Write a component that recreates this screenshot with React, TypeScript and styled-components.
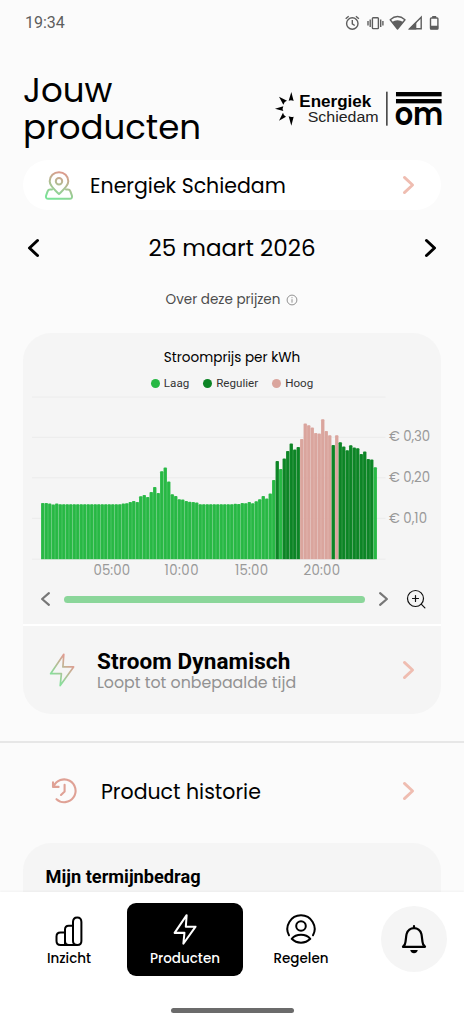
import React from "react";
import styled, { createGlobalStyle } from "styled-components";

const GEO = '"Poppins", "Inter", "Open Sans", sans-serif';
const ROBOTO = '"Roboto", "Liberation Sans", sans-serif';

const GlobalStyle = createGlobalStyle`
  * { box-sizing: border-box; }
  html, body { margin: 0; padding: 0; height: 100%; background: #fbfbfb; }
  body { font-family: ${GEO}; color: #000; overflow: hidden; }
  svg { display: block; flex: none; overflow: visible; }
`;

const Screen = styled.div`
  width: 464px;
  height: 1024px;
  display: flex;
  flex-direction: column;
  overflow: hidden;
  background: #fbfbfb;
`;

const StatusBar = styled.div`
  height: 45px;
  flex: none;
  display: flex;
  align-items: center;
  justify-content: space-between;
  padding: 0 23px 0 25px;
`;

const Clock = styled.span`
  font: 400 16px/20px ${ROBOTO};
  color: #5e5e5e;
`;

const Content = styled.main`
  flex: 1;
  min-height: 0;
  overflow: hidden;
`;

const Header = styled.header`
  display: flex;
  justify-content: space-between;
  height: 115px;
  padding: 27px 22px 0 23px;
`;

const Title = styled.h1`
  margin: 0;
  font-weight: 400;
  font-size: 34px;
  line-height: 36.5px;
`;

const LogoWrap = styled.div`
  padding-top: 18px;
`;

const Pill = styled.div`
  display: flex;
  align-items: center;
  height: 50px;
  margin: 0 23px;
  padding: 0 27px 0 22px;
  border-radius: 25px;
  background: #fff;
`;

const RowLabel = styled.span<{ $indent: number }>`
  flex: 1;
  margin-left: ${(p) => p.$indent}px;
  padding-top: 1px;
  font-size: 20.5px;
  line-height: 30px;
  white-space: nowrap;
`;

const DateNav = styled.div`
  display: flex;
  align-items: center;
  justify-content: space-between;
  height: 76px;
  padding: 0 28px;
`;

const DateText = styled.span`
  font-size: 23px;
  line-height: 30px;
`;

const PriceInfo = styled.div`
  display: flex;
  align-items: center;
  justify-content: center;
  gap: 6px;
  height: 28px;
  font-size: 13.5px;
  color: #4c4c4c;
`;

const Card = styled.section`
  height: 381px;
  margin: 19px 23px 0;
  border-radius: 28px;
  background: #f5f5f5;
  overflow: hidden;
`;

const ChartPanel = styled.div`
  height: 291px;
  padding-top: 14px;
`;

const ChartTitle = styled.div`
  text-align: center;
  font-size: 13.6px;
  line-height: 22px;
`;

const Legend = styled.div`
  display: flex;
  justify-content: center;
  gap: 14px;
  height: 26px;
  padding-top: 2px;
`;

const LegendItem = styled.span<{ $color: string }>`
  display: flex;
  align-items: center;
  gap: 4px;
  font: 400 11.6px/24px ${ROBOTO};
  color: #333;
  &::before {
    content: "";
    width: 9px;
    height: 9px;
    border-radius: 50%;
    background: ${(p) => p.$color};
  }
`;

const ScrollRow = styled.div`
  display: flex;
  align-items: center;
  height: 30px;
  padding: 0 15px 0 17.5px;
`;

const ScrollTrack = styled.div`
  flex: 1;
  height: 7px;
  margin: 0 14.5px;
  border-radius: 4px;
  background: #8bd69a;
`;

const ZoomButton = styled.span`
  margin-left: 18px;
`;

const ContractRow = styled.div`
  display: flex;
  align-items: center;
  height: 90px;
  padding: 0 27px 0 26px;
  border-top: 2px solid #fff;
`;

const ContractText = styled.div`
  flex: 1;
  margin-left: 22px;
  padding-top: 2px;
`;

const ContractName = styled.div`
  font: 700 22.5px/24px ${ROBOTO};
  letter-spacing: 0.1px;
  white-space: nowrap;
`;

const ContractTerm = styled.div`
  font-size: 15.8px;
  line-height: 20px;
  color: #929292;
  white-space: nowrap;
`;

const Divider = styled.hr`
  margin: 27px 0 0;
  border: 0;
  height: 2px;
  background: #e7e7e7;
`;

const HistoryRow = styled.div`
  display: flex;
  align-items: center;
  height: 100px;
  padding: 3px 50px 7px 51px;
`;

const TermCard = styled.section`
  height: 100px;
  margin: 0 23px;
  padding: 22px 22.5px;
  border-radius: 28px;
  background: #f5f5f5;
  font: 700 18.2px/24px ${ROBOTO};
`;

const BottomNav = styled.nav`
  flex: none;
  height: 132px;
  display: flex;
  flex-direction: column;
  justify-content: space-between;
  align-items: center;
  padding: 11.4px 0 11px;
  background: #fff;
  box-shadow: 0 -1px 2px rgba(0, 0, 0, 0.04);
`;

const Tabs = styled.div`
  display: flex;
  width: 100%;
  padding: 0 17px 0 11px;
`;

const Tab = styled.div<{ $active?: boolean }>`
  width: 116px;
  height: 73px;
  display: flex;
  flex-direction: column;
  align-items: center;
  padding-top: 10.6px;
  gap: 3px;
  border-radius: 9px;
  background: ${(p) => (p.$active ? "#000" : "transparent")};
  color: ${(p) => (p.$active ? "#fff" : "#000")};
  font-size: 13.5px;
  font-weight: 500;
  line-height: 22px;
`;

const BellButton = styled.div`
  width: 66px;
  height: 66px;
  margin: 2.4px 0 0 auto;
  border-radius: 50%;
  background: #f5f5f5;
  display: flex;
  align-items: center;
  justify-content: center;
`;

const HomeBar = styled.div`
  width: 123px;
  height: 5px;
  border-radius: 3px;
  background: #6b6b6b;
`;

const Chevron = ({ dir = "right", color = "#efbdb1", w = 11, h = 18, sw = 2.8 }: {
  dir?: "left" | "right"; color?: string; w?: number; h?: number; sw?: number;
}) => {
  const a = sw / 2;
  const d = dir === "right"
    ? `M${a} ${a}L${w - a} ${h / 2}L${a} ${h - a}`
    : `M${w - a} ${a}L${a} ${h / 2}L${w - a} ${h - a}`;
  return (
    <svg width={w} height={h} fill="none" stroke={color} strokeWidth={sw} strokeLinecap="round" strokeLinejoin="round">
      <path d={d} />
    </svg>
  );
};

const StatusIcons = () => (
  <svg width="96" height="16" viewBox="0 0 96 16" fill="none" stroke="#5e5e5e" strokeWidth="1.4">
    <circle cx="7.3" cy="8.5" r="5.7" />
    <path d="M7.3 5v3.8l2.4 1.7M.7 3.8L3.7 1.2M13.9 3.8L10.9 1.2" />
    <rect x="27.4" y="2.8" width="6" height="10.8" rx=".8" />
    <path d="M25.2 4.5v7.5M35.7 4.5v7.5M23 6v4.4M37.9 6v4.4" />
    <path d="M45.2 4.7Q52.5-1.7 60 4.7L52.5 14Z" strokeLinejoin="round" />
    <path d="M46.9 7Q52.5 3.6 58.2 7L52.5 14Z" fill="#5e5e5e" stroke="none" />
    <path d="M64.6 13.8L76.2 2.2V13.8Z" />
    <path d="M63.5 14.4L71.3 6.8V14.4Z" fill="#5e5e5e" stroke="none" />
    <rect x="85.5" y="3" width="7.4" height="11" rx=".8" />
    <path d="M87.2 1h4v2h-4ZM85.2 10.7h8v3.5h-8Z" fill="#5e5e5e" stroke="none" />
  </svg>
);

const Logo = () => (
  <svg width="168.3" height="36.7" viewBox="125 270 505 110">
    <path d="M177 276L184 303Q177 299 169 302ZM140 290L164 302Q156 304 153 314ZM128 326L153 319Q149 326 153 333ZM140 362L152 338Q154 348 161 350ZM177 377L169 349Q177 353 184 350Z" />
    <text x="201" y="321" fontFamily="Liberation Sans, Arial, sans-serif" fontWeight="700" fontSize="48" textLength="216" lengthAdjust="spacingAndGlyphs">Energiek</text>
    <text x="226" y="366" fontFamily="Liberation Sans, Arial, sans-serif" fontSize="46" fill="#222" textLength="213" lengthAdjust="spacingAndGlyphs">Schiedam</text>
    <rect x="462" y="275" width="3.5" height="102" />
    <rect x="491" y="276" width="137" height="13" />
    <rect x="491" y="297" width="137" height="13" />
    <text x="487" y="376" fontFamily={GEO} fontWeight="600" fontSize="95" textLength="146" lengthAdjust="spacingAndGlyphs">om</text>
  </svg>
);

const PinIcon = () => (
  <svg width="28" height="29" viewBox="0 0 28 29" fill="none" stroke="url(#pin)" strokeWidth="2" strokeLinejoin="round" strokeLinecap="round">
    <defs>
      <linearGradient id="pin" gradientUnits="userSpaceOnUse" x1="19" y1="1" x2="10" y2="28">
        <stop offset="0" stopColor="#e0988c" /><stop offset="1" stopColor="#7be398" />
      </linearGradient>
    </defs>
    <path d="M14 23C10 19 4.7 15 4.7 10.2C4.7 5.2 8.8 1.2 14 1.2S23.3 5.2 23.3 10.2C23.3 15 18 19 14 23Z" />
    <circle cx="14" cy="10.3" r="3.2" />
    <path d="M7 18.6H5.2Q3.2 18.6 2.6 20.4L1.1 24.6Q.3 27.8 3.4 27.8H24.6Q27.7 27.8 26.9 24.6L25.4 20.4Q24.8 18.6 22.8 18.6H21" />
  </svg>
);

const InfoIcon = () => (
  <svg width="12" height="12" viewBox="0 0 12 12" fill="none" stroke="#777" strokeWidth=".8">
    <circle cx="6" cy="6" r="4.9" /><path d="M6 5.2v3.5M6 3.2v1" />
  </svg>
);

const ZoomIcon = () => (
  <svg width="20" height="20" viewBox="0 0 20 20" fill="none" stroke="#111" strokeWidth="1.2" strokeLinecap="round">
    <circle cx="9.5" cy="9.5" r="8" /><path d="M15.2 15.2L18.9 18.9M9.5 6.5v6M6.5 9.5h6" />
  </svg>
);

const BoltIcon = ({ color }: { color?: string }) => (
  <svg width={color ? 24 : 26} height={color ? 31 : 34} viewBox="0 0 26 34" fill="none" stroke={color ?? "url(#bolt)"} strokeWidth={color ? 2.2 : 1.7} strokeLinejoin="round">
    <defs>
      <linearGradient id="bolt" gradientUnits="userSpaceOnUse" x1="21" y1="9" x2="5" y2="24">
        <stop offset="0" stopColor="#df9d92" /><stop offset="1" stopColor="#88df9b" />
      </linearGradient>
    </defs>
    <path d="M14.8 1.3L1.6 20.7H12.4L11.2 32.6L24.6 13.9H13.9Z" />
  </svg>
);

const HistoryIcon = () => (
  <svg width="27" height="26" viewBox="0 0 27 26" fill="none" stroke="#dfa195" strokeWidth="2.1" strokeLinecap="round" strokeLinejoin="round">
    <path d="M2 4.4V8.9H7.6M2.6 8.5A11.4 11.4 0 1 1 5.5 21.2M13.6 6.8v6.7L10 17" />
  </svg>
);

const BarsIcon = () => (
  <svg width="28" height="31" viewBox="0 -1 28 31" fill="none" stroke="#000" strokeWidth="2">
    <path d="M9.8 30H5.5Q1.5 30 1.5 26V21.4Q1.5 17.4 5.5 17.4H9.8M10 30V14.5Q10 10.8 13.7 10.8H18M13.7 30Q10 30 10 26M18 26V7Q18 2.4 22.2 2.4T26.4 7V26Q26.4 30 22.4 30H9.8M18 26Q18 30 22.4 30" />
  </svg>
);

const UserIcon = () => (
  <svg width="30" height="31" viewBox="0 0 30 31" fill="none" stroke="#000" strokeWidth="2" strokeLinecap="round" strokeLinejoin="round">
    <path d="M3 21.3A13.6 13.6 0 1 1 27 21.3" /><circle cx="15" cy="12" r="4.8" />
    <path d="M5.7 24.8Q9 20.8 15 20.8T24.3 24.8Q20.5 28.7 15 28.7T5.7 24.8Z" />
  </svg>
);

const BellIcon = () => (
  <svg width="26" height="30" viewBox="0 0 26 30" fill="none" stroke="#000" strokeWidth="2.2" strokeLinecap="round" strokeLinejoin="round">
    <path d="M13 2V3.5M2 22.8H24L22.2 20.5C20.8 17 21.3 13.5 20.4 10Q18.5 4.2 13 4.2T5.6 10C4.7 13.5 5.2 17 3.8 20.5Z" />
    <path d="M9.2 26H16.8Q15.8 29.2 13 29.2T9.2 26Z" fill="#000" stroke="none" />
  </svg>
);

const LOW = "#27b844";
const REGULAR = "#0c8425";
const HIGH = "#daa59d";

const HEIGHTS = [
  56.3, 56.3, 55.7, 54.8, 55.7, ...Array(18).fill(55), 55.7, 56, 57.3, 58.3, 57.3, 63, 64.3, 62.3, 67.3,
  72.3, 66.3, 88, 91.7, 77.7, 65, 63.3, 60, 59.7, 58.3, 57.5, 57.2, 56.7, ...Array(10).fill(55), 55.6, 55.4,
  56.3, 56, 57.3, 56, 58, 60, 63.3, 60.7, 65.7, 79.3, 98.3, 90.3, 100.7, 108.3, 115.7, 109.7, 112.3,
  120.3, 135.7, 134, 131.7, 126.3, 125.7, 140, 128.3, 124, 114.3, 124, 117, 112.7, 109, 114, 111.7, 111,
  105.3, 107.7, 100.3, 99.7, 92,
];

const barColor = (i: number) => {
  if (i < 67 || i === 68 || i === 95) return LOW;
  if ((i >= 74 && i <= 82) || i === 84) return HIGH;
  return REGULAR;
};

const PriceChart = () => (
  <svg width="418" height="189" viewBox="23 395 418 189">
    {[397, 437.3, 477.8, 518.3, 559.2].map((y) => (
      <line key={y} x1="32" x2="385.5" y1={y} y2={y} stroke="#ececec" />
    ))}
    {HEIGHTS.map((h, i) => {
      const x = 41 + i * 3.5;
      const y = 559.3 - h;
      return (
        <g key={i} fill={barColor(i)}>
          <path opacity=".85" d={`M${x} 559.3V${y + 1}q0 -1 1 -1h1.5q1 0 1 1V559.3Z`} />
          <rect x={x + 0.6} y={y + 0.3} width="2.3" height={h - 0.6} />
        </g>
      );
    })}
    <g fontFamily={GEO} fontSize="13.3" fill="#999">
      {[["€ 0,30", 436.8, 41], ["€ 0,20", 477.5, 41], ["€ 0,10", 518, 38]].map(([t, y, w]) => (
        <text key={t} x="389" y={Number(y) + 4.5} textLength={w}>{t}</text>
      ))}
      {[["05:00", 93.5, 36.5], ["10:00", 164.5, 34], ["15:00", 235, 33], ["20:00", 303.5, 36.5]].map(([t, x, w]) => (
        <text key={t} x={x} y="575.3" textLength={w}>{t}</text>
      ))}
    </g>
  </svg>
);

export default function App() {
  return (
    <>
      <GlobalStyle />
      <Screen>
        <StatusBar>
          <Clock>19:34</Clock>
          <StatusIcons />
        </StatusBar>
        <Content>
          <Header>
            <Title>Jouw<br />producten</Title>
            <LogoWrap><Logo /></LogoWrap>
          </Header>
          <Pill>
            <PinIcon />
            <RowLabel $indent={17}>Energiek Schiedam</RowLabel>
            <Chevron />
          </Pill>
          <DateNav>
            <Chevron dir="left" color="#000" sw={3} />
            <DateText>25 maart 2026</DateText>
            <Chevron color="#000" sw={3} />
          </DateNav>
          <PriceInfo>Over deze prijzen<InfoIcon /></PriceInfo>
          <Card>
            <ChartPanel>
              <ChartTitle>Stroomprijs per kWh</ChartTitle>
              <Legend>
                <LegendItem $color={LOW}>Laag</LegendItem>
                <LegendItem $color={REGULAR}>Regulier</LegendItem>
                <LegendItem $color={HIGH}>Hoog</LegendItem>
              </Legend>
              <PriceChart />
              <ScrollRow>
                <Chevron dir="left" color="#777" w={9} h={14} sw={2.2} />
                <ScrollTrack />
                <Chevron color="#777" w={9} h={14} sw={2.2} />
                <ZoomButton><ZoomIcon /></ZoomButton>
              </ScrollRow>
            </ChartPanel>
            <ContractRow>
              <BoltIcon />
              <ContractText>
                <ContractName>Stroom Dynamisch</ContractName>
                <ContractTerm>Loopt tot onbepaalde tijd</ContractTerm>
              </ContractText>
              <Chevron />
            </ContractRow>
          </Card>
          <Divider />
          <HistoryRow>
            <HistoryIcon />
            <RowLabel $indent={23}>Product historie</RowLabel>
            <Chevron />
          </HistoryRow>
          <TermCard>Mijn termijnbedrag</TermCard>
        </Content>
        <BottomNav>
          <Tabs>
            <Tab><BarsIcon />Inzicht</Tab>
            <Tab $active><BoltIcon color="#fff" />Producten</Tab>
            <Tab><UserIcon />Regelen</Tab>
            <BellButton><BellIcon /></BellButton>
          </Tabs>
          <HomeBar />
        </BottomNav>
      </Screen>
    </>
  );
}
